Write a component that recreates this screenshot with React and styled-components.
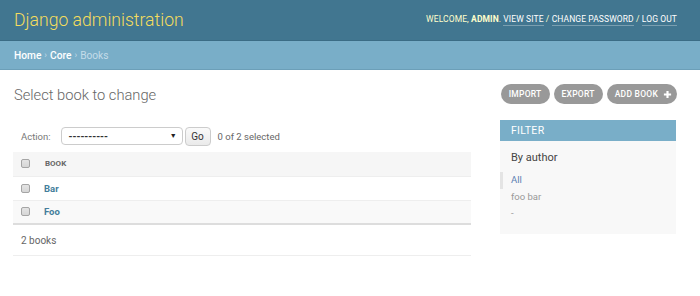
import React from "react";
import styled, { createGlobalStyle } from "styled-components";

const Global = createGlobalStyle`
  html, body { margin: 0; padding: 0; background: #fff; }
  body { font-family: Roboto, "Liberation Sans", sans-serif; color: #333; }
  * { box-sizing: border-box; }
`;

const Header = styled.header`
  height: 41px;
  background: #417690;
  border-bottom: 1px solid #3b6c85;
  display: flex;
  align-items: center;
  justify-content: space-between;
  padding: 0 23px 0 14px;
`;

const Branding = styled.h1`
  margin: 0;
  font-weight: 300;
  font-size: 17.6px;
  color: #f5dd5d;
  line-height: 22px;
  margin-top: -1px;
`;

const UserTools = styled.div`
  font-size: 8.5px;
  letter-spacing: 0.1px;
  text-transform: uppercase;
  color: #ffc;
  font-weight: 400;
  margin-top: -2px;
  white-space: nowrap;
  strong { font-weight: 700; color: #ffc; }
`;

const ToolLink = styled.a`
  color: #fff;
  text-decoration: none;
  border-bottom: 1px solid rgba(255, 255, 255, 0.3);
  padding-bottom: 1px;
`;

const Breadcrumbs = styled.nav`
  height: 29px;
  background: #79aec8;
  border-bottom: 1px solid #6c9fb8;
  display: flex;
  align-items: center;
  padding: 0 14px;
  font-size: 10.2px;
  color: #c4dce8;
`;

const Crumb = styled.a`
  color: #fff;
  text-decoration: none;
  font-weight: 500;
`;

const Sep = styled.span`
  margin: 0 3px;
  color: #c4dce8;
  font-size: 9px;
`;

const Content = styled.main`
  padding: 14px 23px 0 13px;
`;

const TopRow = styled.div`
  display: flex;
  justify-content: space-between;
  align-items: flex-start;
`;

const Title = styled.h1`
  margin: 1px 0 0 1px;
  font-weight: 300;
  font-size: 14.7px;
  line-height: 20px;
  color: #666;
`;

const ObjectTools = styled.div`
  display: flex;
  gap: 4px;
`;

const ToolButton = styled.a`
  height: 20px;
  display: inline-flex;
  align-items: center;
  gap: 5px;
  padding: 0 ${(p) => (p.$add ? "5px" : "8px")} 0 8px;
  background: #999;
  border-radius: 15px;
  color: #fff;
  font-size: 8.5px;
  font-weight: 500;
  letter-spacing: 0.25px;
  text-transform: uppercase;
  text-decoration: none;
`;

const Body = styled.div`
  display: flex;
  align-items: flex-start;
  gap: 29px;
  margin-top: 15px;
`;

const Changelist = styled.div`
  width: 458px;
`;

const Actions = styled.div`
  display: flex;
  align-items: center;
  padding: 7px 8px 7px;
  height: 32px;
  font-size: 9.5px;
  color: #777;
`;

const ActionLabel = styled.label`
  margin-right: 10px;
`;

const Select = styled.div`
  width: 122px;
  height: 18px;
  border: 1px solid #ccc;
  border-radius: 4px;
  display: flex;
  align-items: center;
  justify-content: space-between;
  padding: 0 5px 0 7px;
  color: #333;
  font-weight: 700;
  font-size: 10px;
  background: #fff;
`;

const Arrow = styled.span`
  font-size: 7px;
  color: #222;
`;

const GoButton = styled.button`
  margin-left: 2px;
  height: 19px;
  width: 26px;
  padding: 0;
  border: 1px solid #ccc;
  border-radius: 4px;
  background: linear-gradient(#fafafa, #eaeaea);
  font-family: inherit;
  font-size: 10px;
  color: #333;
`;

const Counter = styled.span`
  margin-left: 7px;
  color: #666;
  font-size: 9.5px;
`;

const Table = styled.table`
  width: 100%;
  border-collapse: collapse;
  border-bottom: 2px solid #ddd;
`;

const Th = styled.th`
  height: 24px;
  background: #f6f6f6;
  text-align: left;
  padding: ${(p) => (p.$narrow ? "0 0 0 8px" : "0 8px")};
  font-size: 8px;
  font-weight: 700;
  color: #666;
  text-transform: uppercase;
  width: ${(p) => (p.$narrow ? "24px" : "auto")};
`;

const Tr = styled.tr`
  background: ${(p) => (p.$alt ? "#f9f9f9" : "#fff")};
  border-top: 1px solid #eee;
`;

const Td = styled.td`
  height: 24px;
  padding: ${(p) => (p.$narrow ? "0 0 0 8px" : "0 7px")};
  font-size: 9.5px;
  width: ${(p) => (p.$narrow ? "24px" : "auto")};
`;

const Check = styled.span`
  display: block;
  width: 9px;
  height: 9px;
  border: 1px solid #a5a5a5;
  border-radius: 2px;
  background: linear-gradient(#e4e4e4, #d6d6d6);
`;

const RowLink = styled.a`
  color: #447e9b;
  font-weight: 700;
  text-decoration: none;
`;

const Paginator = styled.p`
  margin: 0;
  height: 31px;
  display: flex;
  align-items: center;
  padding: 0 8px;
  font-size: 10px;
  color: #666;
  border-bottom: 1px solid #eee;
`;

const Filter = styled.aside`
  width: 176px;
  background: #f8f8f8;
  padding-bottom: 12px;
`;

const FilterHead = styled.h2`
  margin: 0;
  height: 21px;
  background: #79aec8;
  color: #fff;
  font-size: 10.5px;
  font-weight: 400;
  letter-spacing: 0.3px;
  padding: 0 11px;
  display: flex;
  align-items: center;
`;

const FilterTitle = styled.h3`
  margin: 0;
  padding: 10px 11px 7px;
  font-size: 11px;
  font-weight: 400;
  color: #444;
  line-height: 14px;
`;

const FilterList = styled.ul`
  list-style: none;
  margin: 0;
  padding: 0;
`;

const FilterItem = styled.li`
  font-size: 9.5px;
  line-height: 16.5px;
  padding: 0 11px 0 8px;
  border-left: 3px solid ${(p) => (p.$selected ? "#e4e4e4" : "transparent")};
  color: ${(p) => (p.$selected ? "#5b80b2" : "#999")};
`;

function Plus() {
  return (
    <svg width="9" height="9" viewBox="0 0 10 10">
      <path d="M5 1v8M1 5h8" stroke="#fff" strokeWidth="2.4" />
    </svg>
  );
}

export default function App() {
  return (
    <>
      <Global />
      <Header>
        <Branding>Django administration</Branding>
        <UserTools>
          Welcome, <strong>admin</strong>. <ToolLink>View site</ToolLink> /{" "}
          <ToolLink>Change password</ToolLink> / <ToolLink>Log out</ToolLink>
        </UserTools>
      </Header>
      <Breadcrumbs>
        <Crumb>Home</Crumb>
        <Sep>›</Sep>
        <Crumb>Core</Crumb>
        <Sep>›</Sep>
        Books
      </Breadcrumbs>
      <Content>
        <TopRow>
          <Title>Select book to change</Title>
          <ObjectTools>
            <ToolButton>Import</ToolButton>
            <ToolButton>Export</ToolButton>
            <ToolButton $add>
              Add book <Plus />
            </ToolButton>
          </ObjectTools>
        </TopRow>
        <Body>
          <Changelist>
            <Actions>
              <ActionLabel>Action:</ActionLabel>
              <Select>
                ---------- <Arrow>▼</Arrow>
              </Select>
              <GoButton>Go</GoButton>
              <Counter>0 of 2 selected</Counter>
            </Actions>
            <Table>
              <thead>
                <tr>
                  <Th $narrow>
                    <Check />
                  </Th>
                  <Th>Book</Th>
                </tr>
              </thead>
              <tbody>
                <Tr>
                  <Td $narrow>
                    <Check />
                  </Td>
                  <Td>
                    <RowLink>Bar</RowLink>
                  </Td>
                </Tr>
                <Tr $alt>
                  <Td $narrow>
                    <Check />
                  </Td>
                  <Td>
                    <RowLink>Foo</RowLink>
                  </Td>
                </Tr>
              </tbody>
            </Table>
            <Paginator>2 books</Paginator>
          </Changelist>
          <Filter>
            <FilterHead>FILTER</FilterHead>
            <FilterTitle>By author</FilterTitle>
            <FilterList>
              <FilterItem $selected>All</FilterItem>
              <FilterItem>foo bar</FilterItem>
              <FilterItem>-</FilterItem>
            </FilterList>
          </Filter>
        </Body>
      </Content>
    </>
  );
}
